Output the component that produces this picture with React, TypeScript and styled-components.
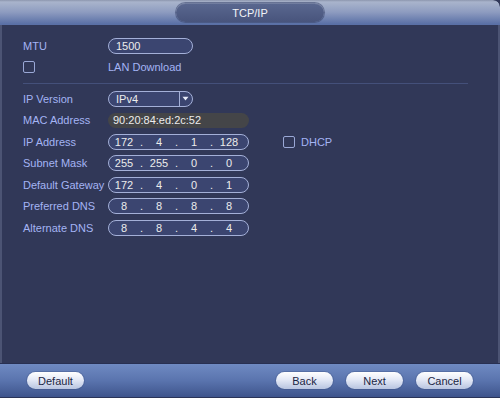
import { FC } from 'react'
import styled, { createGlobalStyle } from 'styled-components'

const GlobalStyle = createGlobalStyle`
  html, body {
    margin: 0;
    padding: 0;
    background: #313858;
  }
  body {
    font-family: 'Liberation Sans', Arial, sans-serif;
  }
`

type Row = { label: string; ip: string[] }

const ipRows: Row[] = [
  { label: 'IP Address', ip: ['172', '4', '1', '128'] },
  { label: 'Subnet Mask', ip: ['255', '255', '0', '0'] },
  { label: 'Default Gateway', ip: ['172', '4', '0', '1'] },
  { label: 'Preferred DNS', ip: ['8', '8', '8', '8'] },
  { label: 'Alternate DNS', ip: ['8', '8', '4', '4'] }
]

const IpField: FC<{ parts: string[] }> = ({ parts }) => (
  <IpBox>
    {parts.map((part, i) => (
      <IpGroup key={i}>
        <IpPart>{part}</IpPart>
        {i < parts.length - 1 && <IpDot>.</IpDot>}
      </IpGroup>
    ))}
  </IpBox>
)

const App: FC = () => {
  return (
    <Window>
      <GlobalStyle />
      <TitleBar>
        <TitlePill>TCP/IP</TitlePill>
      </TitleBar>
      <Content>
        <FormRow>
          <Label>MTU</Label>
          <TextField $width={85}>1500</TextField>
        </FormRow>
        <FormRow>
          <LabelCell>
            <Checkbox />
          </LabelCell>
          <Label>LAN Download</Label>
        </FormRow>
        <Separator />
        <Rows>
          <FormRow>
            <Label>IP Version</Label>
            <Select>
              <SelectValue>IPv4</SelectValue>
              <SelectArrow>
                <svg width="7" height="5" viewBox="0 0 7 5">
                  <path d="M0.5 0.8 L6.5 0.8 L3.5 4.4 Z" fill="#e8ecf8" />
                </svg>
              </SelectArrow>
            </Select>
          </FormRow>
          <FormRow>
            <Label>MAC Address</Label>
            <MacField>90:20:84:ed:2c:52</MacField>
          </FormRow>
          {ipRows.map((row, i) => (
            <FormRow key={row.label}>
              <Label>{row.label}</Label>
              <IpField parts={row.ip} />
              {i === 0 && (
                <DhcpWrap>
                  <Checkbox />
                  <Label>DHCP</Label>
                </DhcpWrap>
              )}
            </FormRow>
          ))}
        </Rows>
      </Content>
      <Footer>
        <Button>Default</Button>
        <FooterRight>
          <Button>Back</Button>
          <Button>Next</Button>
          <Button>Cancel</Button>
        </FooterRight>
      </Footer>
    </Window>
  )
}

const Window = styled.div`
  width: 500px;
  height: 398px;
  display: flex;
  flex-direction: column;
  background: #313858;
  border-top-right-radius: 7px;
  overflow: hidden;
  box-sizing: border-box;
`

const TitleBar = styled.div`
  height: 25px;
  flex-shrink: 0;
  display: flex;
  align-items: center;
  justify-content: center;
  background: linear-gradient(to bottom, #8c96ae 0px, #a9b4cc 2px, #8e9cc0 12px, #5a70a6 24px);
  border-top-right-radius: 7px;
  box-sizing: border-box;
`

const TitlePill = styled.div`
  width: 148px;
  height: 19px;
  margin-top: 0px;
  border-radius: 10px;
  background: linear-gradient(to bottom, #5a6890, #48547c);
  box-shadow: inset 0 1px 0 rgba(255, 255, 255, 0.15), 0 0 0 1px rgba(60, 72, 110, 0.6);
  color: #f2f4f8;
  font-size: 11px;
  display: flex;
  align-items: center;
  justify-content: center;
`

const Content = styled.div`
  flex: 1;
  display: flex;
  flex-direction: column;
  padding: 13px 30px 0 23px;
  border-left: 2px solid #4c5474;
  border-right: 2px solid #4c5474;
  padding-left: 21px;
`

const Rows = styled.div`
  display: flex;
  flex-direction: column;
  gap: 5.5px;
`

const FormRow = styled.div`
  display: flex;
  align-items: center;
  height: 16px;
  & + & {
    margin-top: 5px;
  }
  ${Rows} & + & {
    margin-top: 0;
  }
`

const Label = styled.span`
  color: #a4b4f4;
  font-size: 11px;
  white-space: nowrap;
  &:first-child {
    width: 85px;
  }
`

const LabelCell = styled.div`
  width: 85px;
  display: flex;
  align-items: center;
`

const Checkbox = styled.div`
  width: 10px;
  height: 10px;
  border: 1.5px solid #9aa8d6;
  border-radius: 2px;
`

const Separator = styled.div`
  height: 1px;
  background: #44507a;
  margin: 8px 0 6.5px 0;
`

const fieldBase = `
  height: 16px;
  box-sizing: border-box;
  border: 1.5px solid #a4b0d8;
  border-radius: 8px;
  background: #3b4570;
  color: #ececec;
  font-size: 11px;
  display: flex;
  align-items: center;
`

const TextField = styled.div<{ $width: number }>`
  ${fieldBase}
  width: ${(p) => p.$width}px;
  padding-left: 7px;
`

const Select = styled.div`
  ${fieldBase}
  width: 85px;
  padding-left: 7px;
  justify-content: space-between;
  padding-right: 0;
`

const SelectValue = styled.span`
  flex: 1;
`

const SelectArrow = styled.div`
  width: 11px;
  height: 100%;
  border-left: 1.5px solid #a4b0d8;
  display: flex;
  align-items: center;
  justify-content: center;
  padding-right: 1px;
`

const MacField = styled.div`
  height: 15px;
  width: 141px;
  border-radius: 8px;
  background: #444548;
  color: #ececec;
  font-size: 11px;
  display: flex;
  align-items: center;
  padding-left: 5px;
  box-sizing: border-box;
`

const IpBox = styled.div`
  ${fieldBase}
  width: 141px;
  padding-left: 0px;
`

const IpGroup = styled.div`
  display: flex;
  align-items: center;
`

const IpPart = styled.span`
  width: 30px;
  text-align: center;
`

const IpDot = styled.span`
  width: 5px;
  text-align: center;
`

const DhcpWrap = styled.div`
  display: flex;
  align-items: center;
  gap: 6px;
  margin-left: 34px;
`

const Footer = styled.div`
  height: 35px;
  flex-shrink: 0;
  box-sizing: border-box;
  border-top: 1px solid #283052;
  border-bottom: 1px solid #2a3458;
  background: linear-gradient(to bottom, #6f8ac2, #5a74ae 50%, #3e548c);
  display: flex;
  align-items: center;
  justify-content: space-between;
  padding: 0 27px 0 27px;
`

const FooterRight = styled.div`
  display: flex;
  gap: 13px;
`

const Button = styled.div`
  width: 57px;
  height: 17px;
  border-radius: 9px;
  background: linear-gradient(to bottom, #ffffff, #e4e9f6 45%, #b8c4e0);
  box-shadow: 0 0 0 1px rgba(60, 80, 130, 0.35);
  color: #1c2644;
  font-size: 11px;
  display: flex;
  align-items: center;
  justify-content: center;
`

export default App
